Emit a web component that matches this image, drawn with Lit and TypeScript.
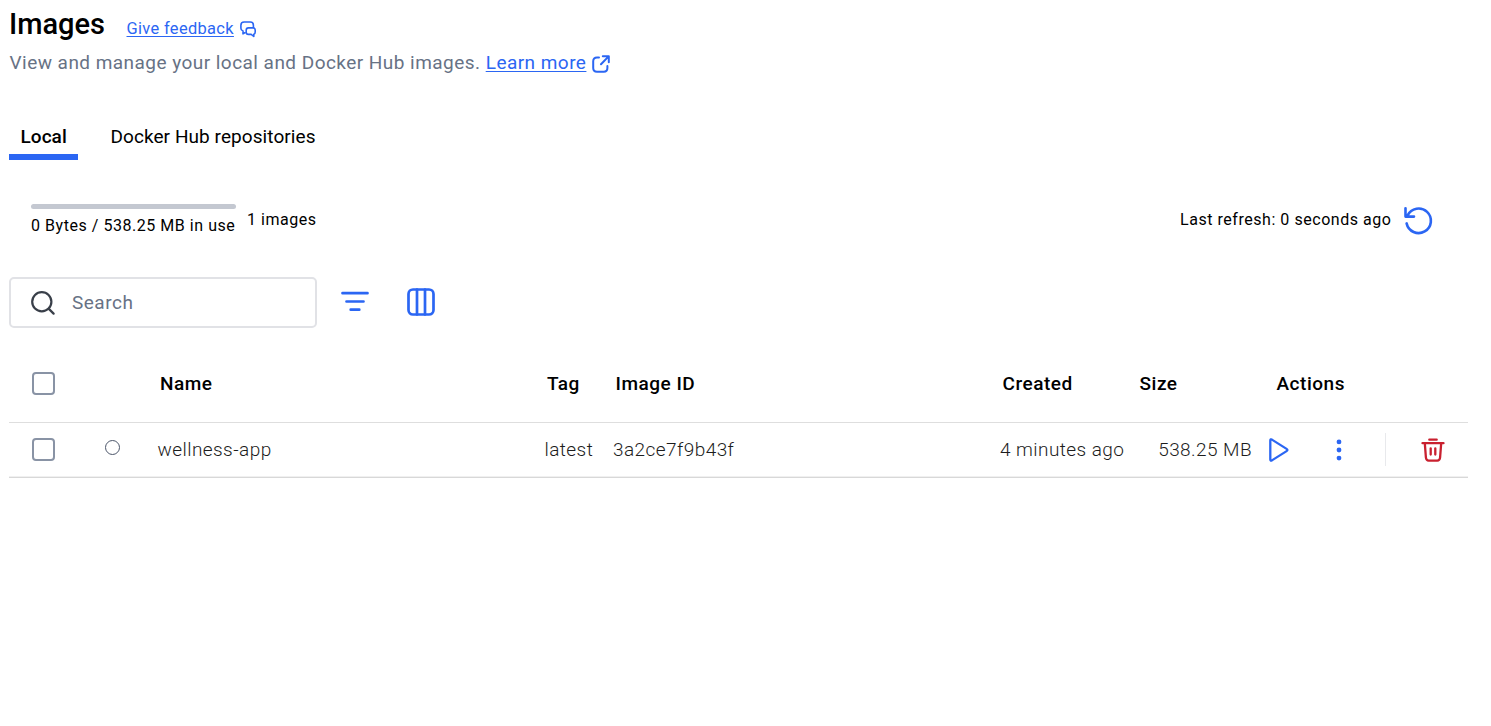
import { LitElement, html, css, svg } from "lit";
import { customElement, property } from "lit/decorators.js";

const icons: Record<string, unknown> = {
  feedback: svg`<svg width="16" height="17" viewBox="0 0 16 17"><path d="M4.800 11.800 3 12.800V10C1.500 9.500 .9 8.600 .9 7.200V4.200C.9 2 1.900 1 4.100 1h6.200C12.500 1 13.400 2 13.400 4.200V6.800M8.400 6.900h4.600c1.500 0 2.200.8 2.200 2.200v2c0 1.200-.5 2-1.400 2.200v2.200l-2.600-2.100H8.400c-1.500 0-2.200-.8-2.200-2.200v-2C6.200 7.700 6.900 6.900 8.400 6.900z"/></svg>`,
  external: svg`<svg width="18" height="18" viewBox="0 0 18 18"><path d="M7 2.600H5C2.500 2.600 1.200 3.800 1.200 6.200V13c0 2.600 1.200 3.800 3.800 3.800h6.800c2.400 0 3.600-1.200 3.600-3.800v-2M10.800 1.200H16.800V7.200M16.600 1.400 9 9.300"/></svg>`,
  refresh: svg`<svg width="30" height="30" viewBox="0 0 30 30"><path d="M2.600 17.400A12.300 12.300 0 1 0 3.600 9.300M1.500 2.200V10.600H10"/></svg>`,
  search: svg`<svg width="24" height="24" viewBox="0 0 24 24"><circle cx="10.800" cy="10.800" r="9.600"/><path d="m17.600 17.600 5 5"/></svg>`,
  filter: svg`<svg width="28" height="22" viewBox="0 0 28 22"><path d="M1.500 2.200H26.500M5.500 10.500H22.500M9.700 18.700H18.300"/></svg>`,
  columns: svg`<svg width="28" height="28" viewBox="0 0 28 28"><rect x="1.500" y="1.500" width="25" height="25" rx="4.500"/><path d="M10 1.500V26.500M18 1.500V26.500"/></svg>`,
  play: svg`<svg width="20" height="24" viewBox="0 0 20 24"><path d="M1.300 2.400C1.300 1.300 2 1.100 2.900 1.600L17.600 10.900C18.700 11.600 18.700 12.400 17.600 13.100L2.900 22.400C2 22.900 1.300 22.700 1.300 21.600Z"/></svg>`,
  more: svg`<svg width="6" height="22" viewBox="0 0 6 22" class="solid"><circle cx="3" cy="2.900" r="2.400"/><circle cx="3" cy="11" r="2.400"/><circle cx="3" cy="19.100" r="2.400"/></svg>`,
  trash: svg`<svg width="24" height="24" viewBox="0 0 24 24"><path d="M1.500 5.200H22.500M8.300 1.700H15.700M3.800 5.200 4.900 19.500C5.100 21.700 5.900 22.600 7.700 22.600H16.300C18.100 22.600 18.900 21.700 19.100 19.500L20.200 5.200M9.700 10.300V16.500M14.300 10.300V16.500"/></svg>`,
};

@customElement("ui-icon")
class UiIcon extends LitElement {
  @property() name = "";
  static styles = css`
    :host { display: inline-flex; flex: none; }
    svg { display: block; fill: none; stroke: currentColor; stroke-width: var(--stroke, 2.3); stroke-linecap: round; stroke-linejoin: round; }
    .solid { fill: currentColor; stroke: none; }
  `;
  render() { return icons[this.name]; }
}

const images = [
  { name: "wellness-app", tag: "latest", id: "3a2ce7f9b43f", created: "4 minutes ago", size: "538.25 MB" },
];

@customElement("app-root")
class AppRoot extends LitElement {
  static styles = css`
    :host { display: block; box-sizing: border-box; height: 726px; padding: 9px 23px 0 9px; background: #fff; color: #000; font-family: Roboto, "Liberation Sans", sans-serif; font-size: 19px; overflow: hidden; }
    * { box-sizing: border-box; }
    .title { display: flex; height: 38px; align-items: flex-start; }
    h1 { margin: 0; width: 117.500px; font-size: 29px; line-height: 30px; font-weight: 500; letter-spacing: 0; }
    a { color: #2b66f3; text-decoration: underline; text-decoration-thickness: 1px; text-underline-offset: 2px; }
    .feedback { font-size: 16.400px; line-height: 20px; letter-spacing: .35px; margin: 10px 6px 0 0; }
    .title ui-icon { color: #2b66f3; --stroke: 1.600; margin-top: 12px; }
    .intro { display: flex; align-items: center; height: 30px; padding-left: .5px; color: #677285; letter-spacing: .46px; white-space: pre; }
    .intro ui-icon { color: #2b66f3; --stroke: 2; margin: 3px 0 0 5.500px; }
    nav { display: flex; gap: 21px; height: 46px; margin-top: 37px; line-height: 46px; }
    nav span { height: 46px; padding: 0 11.500px; line-height: 45px; letter-spacing: .07px; white-space: nowrap; }
    nav .on { width: 69px; font-weight: 500; border-bottom: 6px solid #2b66f3; letter-spacing: .05px; }
    .status { display: flex; height: 32px; margin: 44px 33px 0 22px; font-size: 16px; line-height: 20px; letter-spacing: .54px; white-space: nowrap; }
    .usage { width: 205px; margin-right: 11px; }
    .bar { height: 5px; margin-bottom: 7px; border-radius: 2.500px; background: #c4c8d1; }
    .count, .refreshed { padding-top: 6px; }
    .refreshed { margin-left: auto; }
    .status ui-icon { color: #2b66f3; margin: 1.500px 1px 0 12.500px; --stroke: 2.600; }
    .tools { display: flex; align-items: center; height: 51px; margin-top: 41px; color: #2b66f3; --stroke: 2.700; }
    .tools > ui-icon { margin-top: -1px; position: relative; top: .3px; }
    .search { display: flex; align-items: center; width: 308px; height: 51px; border: 2px solid #e1e2e6; border-radius: 5px; padding-left: 20px; gap: 17px; color: #677285; letter-spacing: .5px; margin-right: 24px; }
    .search ui-icon { color: #393f49; --stroke: 2.200; }
    .filter { margin-right: 38px; }
    .row { display: grid; grid-template-columns: 148.500px 387px 68.500px 387px 137px 132px 1fr; align-items: center; border-bottom: 1px solid #dedede; white-space: nowrap; }
    .head { height: 78px; margin-top: 17px; font-weight: 500; letter-spacing: .52px; padding: 0 0 1px 0; }
    .head > span { padding-left: 2.500px; }
    .head > span:last-child { padding-left: 7.500px; }
    .body { height: 55px; padding-bottom: 1px; font-weight: 300; color: #1c1c1c; letter-spacing: .43px; border-bottom-color: #d8d8d8; box-shadow: inset 0 -1px #f0f0f0; }
    .lead { display: flex; align-items: center; padding-left: 23px; }
    .check { width: 23px; height: 23px; border: 2px solid #8993a5; border-radius: 4px; }
    .unused { width: 15px; height: 15px; border: 1px solid #4c566a; border-radius: 50%; margin: -5px 0 0 50px; }
    .size { padding-right: 17px; text-align: right; }
    .actions { display: flex; align-items: center; color: #2b66f3; }
    .more { margin-left: 46.500px; }
    .divider { width: 1px; height: 33px; margin: 0 35px 0 43.500px; background: #e8e9ec; }
    .delete { color: #c9202f; }
  `;

  render() {
    return html`
      <header>
        <div class="title"><h1>Images</h1><a class="feedback">Give feedback</a><ui-icon name="feedback"></ui-icon></div>
        <div class="intro"><span>View and manage your local and Docker Hub images. </span><a>Learn more</a><ui-icon name="external"></ui-icon></div>
      </header>
      <nav><span class="on">Local</span><span>Docker Hub repositories</span></nav>
      <div class="status">
        <div class="usage"><div class="bar"></div>0 Bytes / 538.25 MB in use</div>
        <span class="count">1 images</span>
        <span class="refreshed">Last refresh: 0 seconds ago</span><ui-icon name="refresh"></ui-icon>
      </div>
      <div class="tools">
        <div class="search"><ui-icon name="search"></ui-icon><span>Search</span></div>
        <ui-icon class="filter" name="filter"></ui-icon><ui-icon name="columns"></ui-icon>
      </div>
      <div class="row head">
        <div class="lead"><div class="check"></div></div>
        ${["Name", "Tag", "Image ID", "Created", "Size", "Actions"].map((t) => html`<span>${t}</span>`)}
      </div>
      ${images.map((i) => html`
        <div class="row body">
          <div class="lead"><div class="check"></div><div class="unused"></div></div>
          <span>${i.name}</span><span>${i.tag}</span><span>${i.id}</span><span>${i.created}</span><span class="size">${i.size}</span>
          <div class="actions"><ui-icon name="play"></ui-icon><ui-icon class="more" name="more"></ui-icon><div class="divider"></div><ui-icon class="delete" name="trash"></ui-icon></div>
        </div>`)}
    `;
  }
}
